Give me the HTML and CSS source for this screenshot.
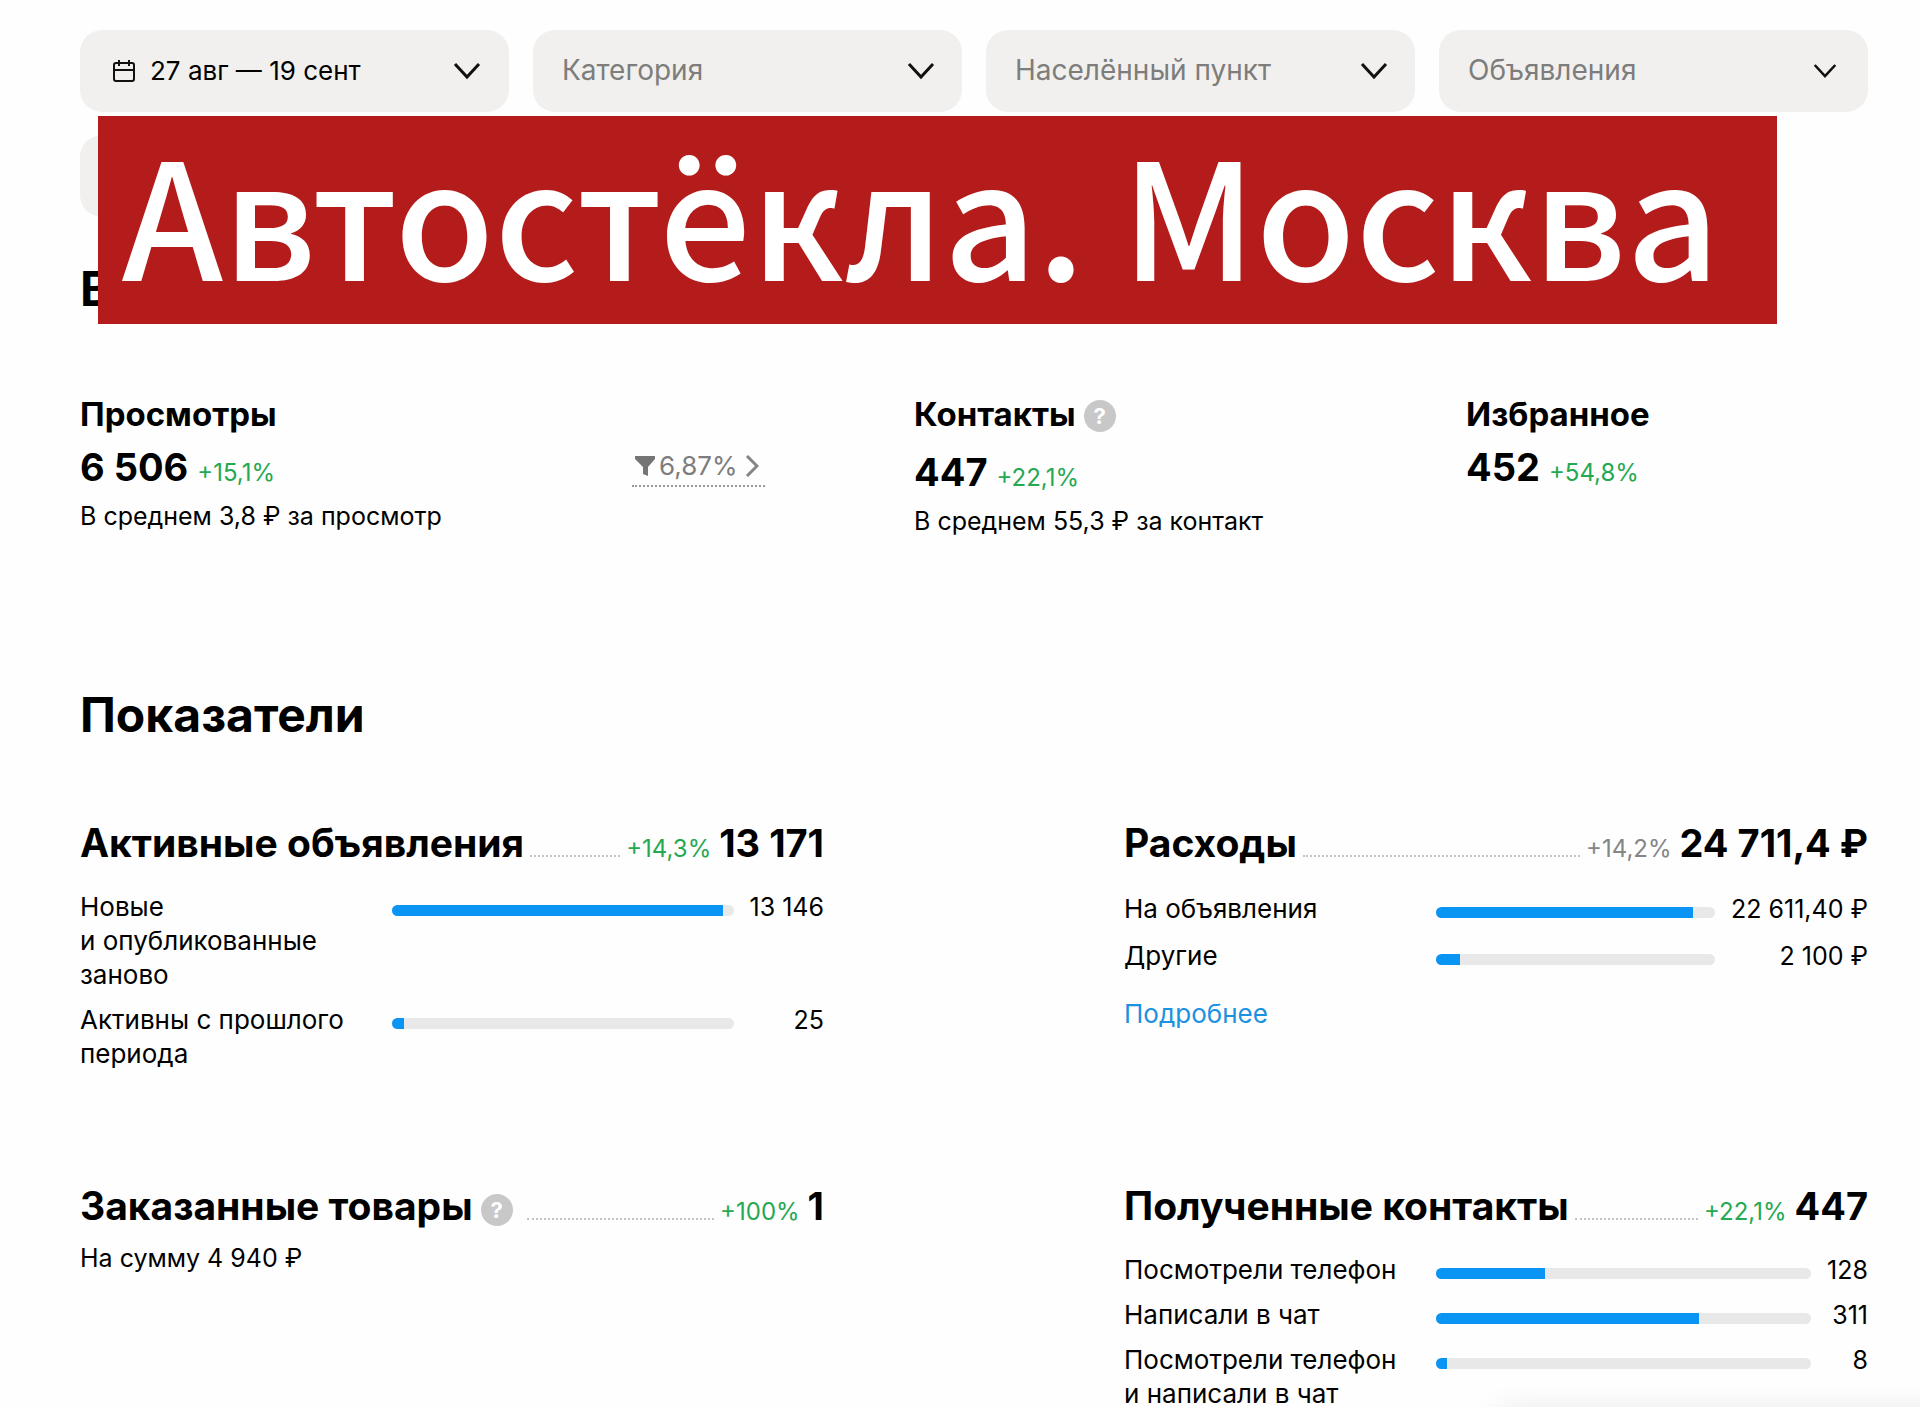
FILE: index.html
```html
<!DOCTYPE html>
<html lang="ru">
<head>
    <meta charset="UTF-8">
    <title>Статистика по объявлениям</title>
    <link rel="stylesheet" href="styles.css">
</head>
<body>
    <main class="page">
        <form class="filters">
            <button type="button" class="filter filter-date">
                <svg class="calendar" viewBox="0 0 24 24" width="24" height="24"><rect x="2" y="4" width="20" height="18" rx="2" /><path d="M2 11h20M7 1v6M17 1v6" /></svg>
                <span>27 авг — 19 сент</span>
                <svg class="chevron" viewBox="0 0 28 18" width="28" height="18"><path d="M2 2l12 13L26 2" /></svg>
            </button>
            <div class="filter-box">
                <select class="filter" aria-label="Категория"><option>Категория</option></select>
                <svg class="chevron" viewBox="0 0 28 18" width="28" height="18"><path d="M2 2l12 13L26 2" /></svg>
            </div>
            <div class="filter-box">
                <select class="filter" aria-label="Населённый пункт"><option>Населённый пункт</option></select>
                <svg class="chevron" viewBox="0 0 28 18" width="28" height="18"><path d="M2 2l12 13L26 2" /></svg>
            </div>
            <div class="filter-box">
                <select class="filter" aria-label="Объявления"><option>Объявления</option></select>
                <svg class="chevron small" viewBox="0 0 28 18" width="24" height="16"><path d="M2 2l12 13L26 2" /></svg>
            </div>
            <div class="filter-box">
                <select class="filter" aria-label="Фильтр"><option></option></select>
            </div>
        </form>
        <div class="banner">Автостёкла. Москва</div>

        <h1>В</h1>
        <section class="funnel">
            <div>
                <h3>Просмотры</h3>
                <p class="total">6 506 <span class="delta">+15,1%</span></p>
                <p class="note">В среднем 3,8 ₽ за просмотр</p>
            </div>
            <div class="conversion">
                <a href="#">
                    <svg class="funnel-icon" viewBox="0 0 22 22" width="22" height="22"><path d="M1 1h20v3l-7 8v9l-5-2v-7L1 4z" /></svg>
                    6,87%
                    <svg class="arrow" viewBox="0 0 14 22" width="14" height="22"><path d="M2 1l10 10L2 21" /></svg>
                </a>
            </div>
            <div>
                <h3>Контакты<button type="button" class="hint" aria-label="Подсказка">?</button></h3>
                <p class="total shifted">447 <span class="delta">+22,1%</span></p>
                <p class="note">В среднем 55,3 ₽ за контакт</p>
            </div>
            <div>
                <h3>Избранное</h3>
                <p class="total">452 <span class="delta">+54,8%</span></p>
            </div>
        </section>

        <h2>Показатели</h2>
        <div class="metrics">
            <section>
                <div class="head">
                    <h3>Активные объявления</h3>
                    <i class="dots"></i>
                    <span class="delta">+14,3%</span>
                    <b>13 171</b>
                </div>
                <div class="rows">
                    <span>Новые<br>и опубликованные<br>заново</span>
                    <div class="bar"><div style="width: 97%"></div></div>
                    <span class="value">13 146</span>
                    <span>Активны с прошлого<br>периода</span>
                    <div class="bar"><div style="width: 3.5%"></div></div>
                    <span class="value">25</span>
                </div>
            </section>
            <section>
                <div class="head">
                    <h3>Расходы</h3>
                    <i class="dots"></i>
                    <span class="delta neutral">+14,2%</span>
                    <b>24 711,4 ₽</b>
                </div>
                <div class="rows rows-money">
                    <span>На объявления</span>
                    <div class="bar"><div style="width: 92%"></div></div>
                    <span class="value">22 611,40 ₽</span>
                    <span>Другие</span>
                    <div class="bar"><div style="width: 8.5%"></div></div>
                    <span class="value">2 100 ₽</span>
                </div>
                <a class="more" href="#">Подробнее</a>
            </section>
            <section>
                <div class="head">
                    <h3>Заказанные товары<button type="button" class="hint" aria-label="Подсказка">?</button></h3>
                    <i class="dots"></i>
                    <span class="delta">+100%</span>
                    <b>1</b>
                </div>
                <p class="note sum">На сумму 4 940 ₽</p>
            </section>
            <section>
                <div class="head">
                    <h3>Полученные контакты</h3>
                    <i class="dots"></i>
                    <span class="delta">+22,1%</span>
                    <b>447</b>
                </div>
                <div class="rows">
                    <span>Посмотрели телефон</span>
                    <div class="bar"><div style="width: 29%"></div></div>
                    <span class="value">128</span>
                    <span>Написали в чат</span>
                    <div class="bar"><div style="width: 70%"></div></div>
                    <span class="value">311</span>
                    <span>Посмотрели телефон<br>и написали в чат</span>
                    <div class="bar"><div style="width: 3%"></div></div>
                    <span class="value">8</span>
                </div>
            </section>
        </div>
    </main>
    <div class="messenger"></div>
</body>
</html>
```
FILE: styles.css
```css
* {
    box-sizing: border-box;
}
body {
    margin: 0;
    background: #fefefe;
    color: #000;
    font-family: Inter, "Liberation Sans", sans-serif;
    font-size: 26px;
    line-height: 34px;
    overflow: hidden;
}
h1, h2, h3, p {
    margin: 0;
}
button, select {
    font: inherit;
    color: inherit;
    border: none;
}
.page {
    position: relative;
    padding: 30px 52px 0 80px;
}
.filters {
    display: grid;
    grid-template-columns: repeat(4, 1fr);
    gap: 23px 24px;
}
.filter-box {
    display: grid;
    align-items: center;
}
.filter {
    width: 100%;
    height: 82px;
    padding: 0 30px;
    border-radius: 22px;
    background: #f1f0ee;
    appearance: none;
}
.filter-box .filter {
    grid-area: 1 / 1;
    padding: 0 29px 2px;
    color: #7d7d7c;
    font-size: 28px;
}
.filter-box .chevron {
    grid-area: 1 / 1;
    justify-self: end;
    margin-right: 27px;
    pointer-events: none;
}
.filter-date {
    display: flex;
    align-items: center;
    gap: 14px;
    padding: 0 28px 0 32px;
}
.filter-date .chevron {
    margin-left: auto;
}
.filter-box .small {
    margin-right: 31px;
}
svg {
    fill: none;
    stroke: #111;
    stroke-width: 3;
}
.calendar {
    stroke-width: 2;
}
.banner {
    position: absolute;
    top: 116px;
    left: 98px;
    right: 143px;
    height: 208px;
    padding-left: 24px;
    background: #b41c1c;
    color: #fff;
    font: 500 162px/190px "Noto Sans CJK SC", "Noto Sans", sans-serif;
    white-space: nowrap;
}
h1, h2 {
    font-size: 48px;
    line-height: 56px;
    font-weight: 700;
}
h1 {
    margin-top: 44px;
}
h3 {
    font-size: 33px;
    line-height: 44px;
    font-weight: 700;
}
.funnel {
    display: grid;
    grid-template-columns: 552fr 282fr 552fr 402fr;
    height: 160px;
    margin-top: 75px;
}
.total {
    margin: 7px 0 2px;
    font-size: 38px;
    line-height: 48px;
    font-weight: 700;
}
.shifted {
    margin-top: 12px;
}
.note {
    font-size: 25px;
}
.delta {
    font-size: 24px;
    font-weight: 400;
    color: #25a852;
}
.neutral {
    color: #858585;
}
.hint {
    width: 32px;
    height: 32px;
    margin-left: 8px;
    padding: 0;
    border-radius: 50%;
    background: #c8c8c8;
    color: #fff;
    font-size: 22px;
    line-height: 32px;
    font-weight: 700;
    vertical-align: 2px;
}
.conversion a {
    display: inline-flex;
    align-items: center;
    gap: 3px;
    margin-top: 57px;
    padding: 0 6px 2px 2px;
    border-bottom: 2px dotted #999;
    color: #7d7d7d;
    text-decoration: none;
}
.conversion .funnel-icon {
    fill: #757575;
    stroke: none;
}
.conversion .arrow {
    margin-left: 5px;
    stroke: #858585;
}
h2 {
    margin-top: 135px;
}
.metrics {
    display: grid;
    grid-template-columns: 1fr 1fr;
    gap: 95px 300px;
    margin-top: 74px;
}
.metrics section {
    min-height: 268px;
}
.head {
    display: flex;
    align-items: baseline;
    white-space: nowrap;
}
.head h3, .head b {
    font-size: 38px;
    line-height: 52px;
    font-weight: 700;
}
.head h3 {
    font-size: 39px;
}
.head .hint {
    margin-right: 8px;
}
.dots {
    flex: 1;
    margin: 0 6px;
    border-bottom: 2px dotted #c4c4c4;
}
.head b {
    margin-left: 8px;
}
.rows {
    display: grid;
    grid-template-columns: 296px 1fr auto;
    gap: 11px 16px;
    margin-top: 21px;
}
.rows-money {
    row-gap: 13px;
    margin-top: 23px;
}
.bar {
    height: 11px;
    margin-top: 15px;
    border-radius: 6px;
    background: #e8e8e8;
    overflow: hidden;
}
.bar div {
    height: 100%;
    background: #0a95f5;
}
.value {
    font-size: 25px;
    text-align: right;
}
.more {
    display: inline-block;
    margin-top: 24px;
    color: #1b91e0;
    text-decoration: none;
}
.sum {
    margin-top: 9px;
}
/* collapsed chat panel, only its shadow shows above the window edge */
.messenger {
    position: fixed;
    right: -40px;
    bottom: -28px;
    width: 460px;
    height: 20px;
    box-shadow: 0 0 32px rgba(0, 0, 0, 0.15);
}
```
